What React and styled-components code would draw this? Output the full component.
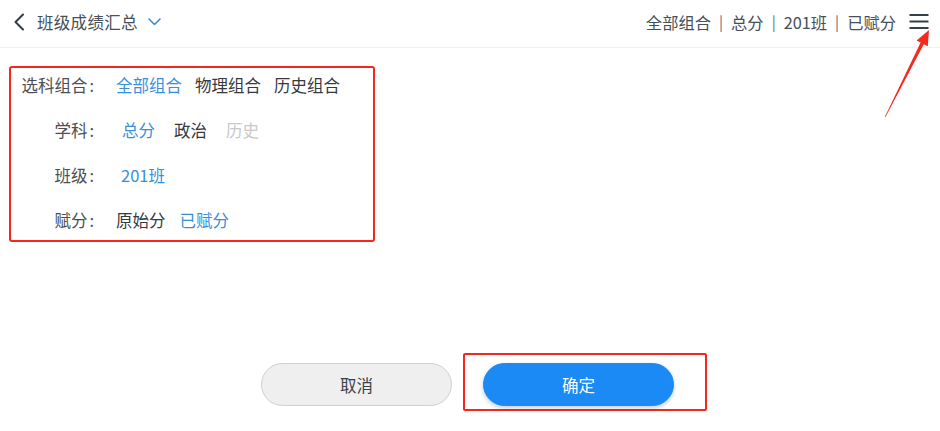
import React from 'react';
import styled, { createGlobalStyle } from 'styled-components';

const GlobalStyle = createGlobalStyle`
  html, body {
    margin: 0;
    padding: 0;
    background: #fff;
  }
  body {
    font-family: "Noto Sans CJK SC", "Noto Sans", sans-serif;
    -webkit-font-smoothing: antialiased;
  }
`;

const Page = styled.div`
  position: relative;
  width: 940px;
  height: 431px;
  overflow: hidden;
  background: #fff;
`;

const Header = styled.header`
  box-sizing: border-box;
  height: 48px;
  display: flex;
  align-items: center;
  justify-content: space-between;
  padding: 0 11px 4px 13px;
  border-bottom: 1px solid #f1f2f4;
`;

const TitleGroup = styled.div`
  display: flex;
  align-items: center;
`;

const Title = styled.span`
  margin-left: 12px;
  font-size: 16.5px;
  color: #46505a;
  letter-spacing: 0.3px;
`;

const CrumbGroup = styled.div`
  display: flex;
  align-items: center;
  font-size: 16.3px;
  color: #46505a;
`;

const Separator = styled.span`
  margin: 0 8px;
  color: #6b7078;
  font-size: 15px;
`;

const MenuButton = styled.button`
  margin-left: 13px;
  padding: 0;
  border: 0;
  background: none;
  display: flex;
`;

const Panel = styled.section`
  box-sizing: border-box;
  margin: 18px 0 0 9px;
  width: 366px;
  height: 176px;
  padding: 5px 0 0;
  border: 2px solid #f5271c;
  border-radius: 3px;
  display: flex;
  flex-direction: column;
  gap: 21px;
`;

const Row = styled.div`
  display: flex;
  align-items: center;
  height: 24px;
`;

const Label = styled.span`
  box-sizing: border-box;
  width: 84px;
  padding-right: 1px;
  text-align: right;
  font-size: 16.5px;
  color: #4b4f55;
  white-space: nowrap;
`;

const Colon = styled.span`
  margin-left: 2px;
`;

const Options = styled.div`
  display: flex;
  align-items: center;
  margin-left: ${(p) => 21 + (p.$indent || 0)}px;
  gap: ${(p) => p.$gap || 13}px;
`;

const Option = styled.span`
  font-size: 16.5px;
  white-space: nowrap;
  color: ${(p) => (p.$active ? '#3a8fdb' : p.$disabled ? '#c9c9c9' : '#363a40')};
`;

const ActionRow = styled.div`
  display: flex;
  justify-content: center;
  align-items: flex-start;
  margin-top: 111px;
  padding-left: 28px;
  gap: 11px;
`;

const PillButton = styled.button`
  box-sizing: border-box;
  width: 191px;
  height: 43px;
  border-radius: 22px;
  font-family: "Noto Sans CJK SC", "Noto Sans", sans-serif;
  font-size: 16.5px;
  cursor: pointer;
  border: 1px solid ${(p) => (p.$primary ? '#1b8af5' : '#cfd0d2')};
  background: ${(p) => (p.$primary ? '#1b8af5' : '#efeff0')};
  color: ${(p) => (p.$primary ? '#fff' : '#3c4148')};
  box-shadow: ${(p) => (p.$primary ? '0 2px 4px rgba(20, 60, 120, 0.25)' : 'none')};
  margin-top: ${(p) => (p.$primary ? 0 : 10)}px;
`;

const Highlight = styled.div`
  border: 2px solid #f5271c;
  border-radius: 2px;
  padding: 8px 31px 3px 18px;
`;

const Arrow = styled.svg`
  position: absolute;
  left: 0;
  top: 0;
  pointer-events: none;
`;

const BackIcon = () => (
  <svg width="12" height="18" viewBox="0 0 12 18">
    <path d="M10 1.5 L2.5 9 L10 16.5" fill="none" stroke="#333c46" strokeWidth="2" strokeLinecap="round" strokeLinejoin="round" />
  </svg>
);

const DownIcon = () => (
  <svg width="13" height="8" viewBox="0 0 13 8" style={{ marginLeft: 10 }}>
    <path d="M1 1 L6.5 6.5 L12 1" fill="none" stroke="#3a8fdb" strokeWidth="1.6" strokeLinecap="round" strokeLinejoin="round" />
  </svg>
);

const MenuIcon = () => (
  <svg width="20" height="18" viewBox="0 0 20 18">
    <g stroke="#36404b" strokeWidth="2">
      <line x1="0.5" y1="2" x2="19.5" y2="2" />
      <line x1="0.5" y1="8.5" x2="19.5" y2="8.5" />
      <line x1="0.5" y1="15" x2="19.5" y2="15" />
    </g>
  </svg>
);

const crumbs = ['全部组合', '总分', '201班', '已赋分'];

const filters = [
  {
    label: '选科组合',
    indent: 0,
    gap: 13,
    options: [
      { text: '全部组合', active: true },
      { text: '物理组合' },
      { text: '历史组合' },
    ],
  },
  {
    label: '学科',
    indent: 6,
    gap: 19,
    options: [
      { text: '总分', active: true },
      { text: '政治' },
      { text: '历史', disabled: true },
    ],
  },
  {
    label: '班级',
    indent: 5,
    gap: 13,
    options: [{ text: '201班', active: true }],
  },
  {
    label: '赋分',
    indent: 0,
    gap: 14,
    options: [{ text: '原始分' }, { text: '已赋分', active: true }],
  },
];

export default function App() {
  return (
    <>
      <GlobalStyle />
      <Page>
        <Header>
          <TitleGroup>
            <BackIcon />
            <Title>班级成绩汇总</Title>
            <DownIcon />
          </TitleGroup>
          <CrumbGroup>
            {crumbs.map((c, i) => (
              <React.Fragment key={c}>
                {i > 0 && <Separator>|</Separator>}
                <span>{c}</span>
              </React.Fragment>
            ))}
            <MenuButton aria-label="菜单">
              <MenuIcon />
            </MenuButton>
          </CrumbGroup>
        </Header>

        <Panel>
          {filters.map((f) => (
            <Row key={f.label}>
              <Label>
                {f.label}
                <Colon>:</Colon>
              </Label>
              <Options $indent={f.indent} $gap={f.gap}>
                {f.options.map((o) => (
                  <Option key={o.text} $active={o.active} $disabled={o.disabled}>
                    {o.text}
                  </Option>
                ))}
              </Options>
            </Row>
          ))}
        </Panel>

        <ActionRow>
          <PillButton>取消</PillButton>
          <Highlight>
            <PillButton $primary>确定</PillButton>
          </Highlight>
        </ActionRow>

        <Arrow width="940" height="431" viewBox="0 0 940 431">
          <polygon
            points="884.8,117 920.6,42.6 916.6,40.6 929,30 927.8,46.2 923.8,44.2 885.4,117.2"
            fill="#f52a1f"
          />
        </Arrow>
      </Page>
    </>
  );
}
